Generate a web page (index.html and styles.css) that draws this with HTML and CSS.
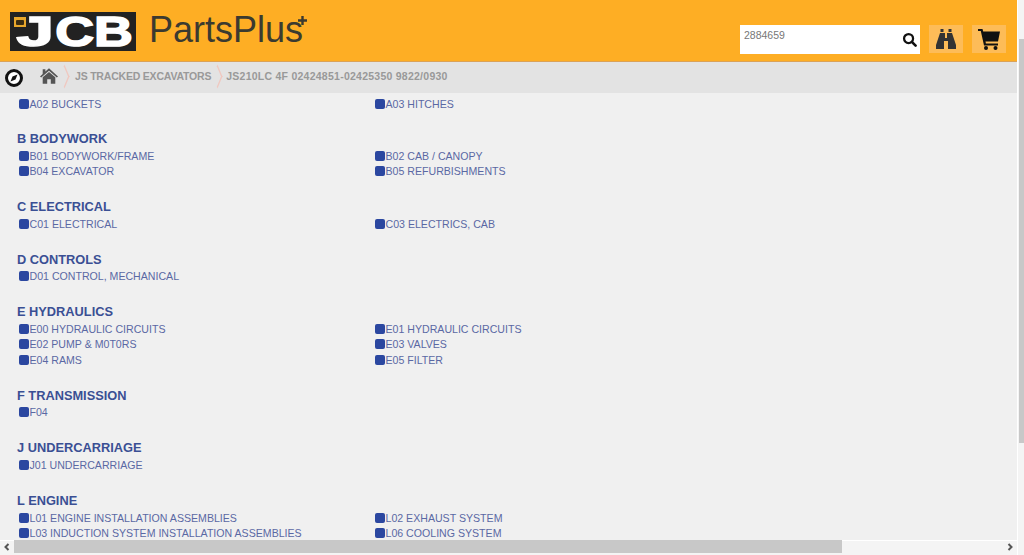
FILE: index.html
```html
<!DOCTYPE html>
<html lang="en">
<head>
    <meta charset="UTF-8">
    <meta name="viewport" content="width=device-width, initial-scale=1.0">
    <title>JCB PartsPlus</title>
    <link rel="stylesheet" href="styles.css">
</head>
<body>
    <div class="page">
        <div class="main">
            <div class="header">
                <div class="logo">
                    <span class="logo-badge"><span class="logo-badge-mark"></span></span>
                    <span class="logo-text"><span class="logo-j">J</span>CB</span>
                </div>
                <div class="brand">PartsPlus<svg class="brand-plus" viewBox="0 0 9 9"><path d="M3.300 0h2.400v3.300H9v2.400H5.700V9H3.300V5.700H0V3.300h3.300z" fill="#3b3a30"/></svg></div>
                <div class="tools">
                    <div class="search">
                        <span class="search-value">2884659</span>
                        <svg class="search-icon" viewBox="0 0 16 16"><circle cx="7" cy="7" r="4.800" fill="none" stroke="#111" stroke-width="2.400"/><path d="M10.500 10.500L14.500 14.500" stroke="#111" stroke-width="2.800" stroke-linecap="round"/></svg>
                    </div>
                    <div class="tool-btn">
                        <svg class="tool-icon" viewBox="0 0 24 22"><path fill="#333" d="M6.500 1h3v3h-3zM14.500 1h3v3h-3zM6 5h5v5h2V5h5l4 12v4h-8v-8h-4v8H2v-4z"/></svg>
                    </div>
                    <div class="tool-btn">
                        <svg class="tool-icon" viewBox="0 0 24 22"><path fill="#111" d="M1 1h4.500l.7 2.500H23l-2 10H8.500l.4 2H21v2H7L3.800 3H1z"/><circle cx="9" cy="20" r="2" fill="#111"/><circle cx="18.500" cy="20" r="2" fill="#111"/></svg>
                    </div>
                </div>
            </div>
            <div class="crumbs">
                <svg class="compass" viewBox="0 0 20 20"><circle cx="10" cy="10" r="7.500" fill="#fff" stroke="#111" stroke-width="3"/><path d="M13.500 6.500L11.500 11.500L6.500 13.500L8.500 8.500z" fill="#111"/></svg>
                <svg class="home" viewBox="0 0 20 17"><path fill="#555" d="M10 0L20 9l-1.300 1.300L10 2.600 1.300 10.300 0 9l3-2.700V1h3v2.600z"/><path fill="#555" d="M10 4l7 6v7h-5v-5H8v5H3v-7z"/></svg>
                <span class="crumb-sep"></span>
                <span class="crumb crumb-first">JS TRACKED EXCAVATORS</span>
                <span class="crumb-sep"></span>
                <span class="crumb crumb-last">JS210LC 4F 02424851-02425350 9822/0930</span>
            </div>
            <div class="content">
                <div class="links first">
                    <a class="item"><i></i>A02 BUCKETS</a>
                    <a class="item"><i></i>A03 HITCHES</a>
                </div>

                <h2>B BODYWORK</h2>
                <div class="links">
                    <a class="item"><i></i>B01 BODYWORK/FRAME</a>
                    <a class="item"><i></i>B02 CAB / CANOPY</a>
                    <a class="item"><i></i>B04 EXCAVATOR</a>
                    <a class="item"><i></i>B05 REFURBISHMENTS</a>
                </div>

                <h2>C ELECTRICAL</h2>
                <div class="links">
                    <a class="item"><i></i>C01 ELECTRICAL</a>
                    <a class="item"><i></i>C03 ELECTRICS, CAB</a>
                </div>

                <h2>D CONTROLS</h2>
                <div class="links">
                    <a class="item"><i></i>D01 CONTROL, MECHANICAL</a>
                </div>

                <h2>E HYDRAULICS</h2>
                <div class="links">
                    <a class="item"><i></i>E00 HYDRAULIC CIRCUITS</a>
                    <a class="item"><i></i>E01 HYDRAULIC CIRCUITS</a>
                    <a class="item"><i></i>E02 PUMP &amp; M0T0RS</a>
                    <a class="item"><i></i>E03 VALVES</a>
                    <a class="item"><i></i>E04 RAMS</a>
                    <a class="item"><i></i>E05 FILTER</a>
                </div>

                <h2>F TRANSMISSION</h2>
                <div class="links">
                    <a class="item"><i></i>F04</a>
                </div>

                <h2>J UNDERCARRIAGE</h2>
                <div class="links">
                    <a class="item"><i></i>J01 UNDERCARRIAGE</a>
                </div>

                <h2>L ENGINE</h2>
                <div class="links">
                    <a class="item"><i></i>L01 ENGINE INSTALLATION ASSEMBLIES</a>
                    <a class="item"><i></i>L02 EXHAUST SYSTEM</a>
                    <a class="item"><i></i>L03 INDUCTION SYSTEM INSTALLATION ASSEMBLIES</a>
                    <a class="item"><i></i>L06 COOLING SYSTEM</a>
                </div>
            </div>
            <div class="hbar">
                <svg class="arrow" viewBox="0 0 6 8"><path d="M4.500 1L1.500 4l3 3" fill="none" stroke="#555" stroke-width="2"/></svg>
                <div class="hthumb"></div>
                <svg class="arrow arrow-right" viewBox="0 0 6 8"><path d="M1.500 1l3 3-3 3" fill="none" stroke="#555" stroke-width="2"/></svg>
            </div>
        </div>
        <div class="vbar">
            <div class="vtop"></div>
            <div class="vthumb"></div>
        </div>
    </div>
</body>
</html>
```

FILE: styles.css
```css
html, body {
    margin: 0;
    height: 100%;
    overflow: hidden;
}

body {
    font-family: "Liberation Sans", Arial, sans-serif;
    background-color: #f0f0f0;
}

.page {
    display: flex;
    height: 555px;
}

.main {
    width: 1017px;
    flex: none;
    display: flex;
    flex-direction: column;
}

.header {
    height: 61px;
    flex: none;
    display: flex;
    align-items: flex-start;
    background-color: #feae24;
    border-bottom: 1px solid #dba257;
}

.logo {
    width: 126px;
    height: 39px;
    margin: 12px 0 0 10px;
    display: flex;
    align-items: center;
    justify-content: center;
    background-color: #222;
    position: relative;
}

.logo-badge {
    position: absolute;
    left: 4px;
    top: 5px;
    width: 12px;
    height: 10px;
    background-color: #e8a72c;
    display: flex;
    align-items: center;
    justify-content: center;
    z-index: 1;
}

.logo-badge-mark {
    width: 8px;
    height: 5px;
    background-color: #3a2c12;
    border-radius: 1px;
}

.logo-text {
    display: block;
    margin-left: 12px;
    font-weight: bold;
    font-size: 42px;
    line-height: 39px;
    color: #fff;
    -webkit-text-stroke: 1.600px #fff;
    transform: scaleX(1.280);
    white-space: nowrap;
}

.logo-j {
    display: inline-block;
    transform: scaleX(1.250);
    transform-origin: right center;
    margin-right: 1px;
}

.brand {
    margin: 8px 0 0 13px;
    font-size: 36px;
    line-height: 44px;
    color: #3b3a30;
    position: relative;
}

.brand-plus {
    position: absolute;
    right: -4px;
    top: 8px;
    width: 9px;
    height: 9px;
}

.tools {
    margin-left: auto;
    margin-top: 25px;
    margin-right: 11px;
    display: flex;
}

.search {
    width: 180px;
    height: 29px;
    background-color: #fff;
    display: flex;
    justify-content: space-between;
    margin-right: 9px;
}

.search-value {
    font-size: 10.500px;
    color: #777;
    padding: 4px 0 0 4px;
}

.search-icon {
    width: 15px;
    height: 15px;
    margin: 7px 3px 0 0;
}

.tool-btn {
    width: 34px;
    height: 28px;
    margin-right: 9px;
    background-color: #fdbc58;
    display: flex;
    align-items: center;
    justify-content: center;
}

.tool-btn:last-child {
    margin-right: 0;
}

.tool-icon {
    width: 24px;
    height: 22px;
}

.crumbs {
    height: 28px;
    padding-bottom: 3px;
    flex: none;
    display: flex;
    align-items: center;
    background-color: #e3e3e3;
    font-size: 10.500px;
    font-weight: bold;
    color: #999;
}

.compass {
    width: 20px;
    height: 20px;
    margin: 4px 0 0 4px;
}

.home {
    width: 18px;
    height: 16px;
    margin-left: 16px;
}

.crumb-sep {
    width: 6px;
    height: 6px;
    margin: 0 4px 0 3px;
    border-top: 1px solid #f0c8c0;
    border-right: 1px solid #f0c8c0;
    transform: scaleY(2.400) rotate(45deg);
}

.crumb-first {
    letter-spacing: -0.200px;
    margin-left: 3px;
}

.crumb-last {
    letter-spacing: 0.250px;
    margin-left: 1px;
}

.content {
    flex: 1;
    min-height: 0;
    overflow: hidden;
    padding-left: 17px;
}

h2 {
    margin: 0;
    height: 17px;
    font-size: 12.800px;
    line-height: 17px;
    color: #3a4f94;
}

.links {
    display: grid;
    grid-template-columns: 356px 1fr;
    padding-top: 1px;
    margin-bottom: 19.350px;
}

.links.first {
    padding-top: 3px;
    margin-bottom: 18.900px;
}

.item {
    display: flex;
    align-items: center;
    height: 15.300px;
    font-size: 10.600px;
    color: #5a68a4;
}

.item i {
    width: 10px;
    height: 10px;
    margin: 0 0.500px 0 2px;
    background-color: #2b47a0;
    border-radius: 2px;
}

.hbar {
    height: 15px;
    flex: none;
    display: flex;
    align-items: flex-start;
    background-color: #f4f4f4;
    box-shadow: inset 0 1px #fff;
}

.arrow {
    width: 6px;
    height: 8px;
    margin: 3px 4px 0;
    flex: none;
}

.arrow-right {
    margin-left: auto;
}

.hthumb {
    width: 828px;
    height: 13px;
    background-color: #c8c8c8;
}

.vbar {
    flex: 1;
    background-color: #f4f4f4;
    box-shadow: inset 1px 0 #fff;
    padding-left: 2px;
}

.vtop {
    height: 39px;
}

.vthumb {
    height: 404px;
    background-color: #c8c8c8;
}
```
